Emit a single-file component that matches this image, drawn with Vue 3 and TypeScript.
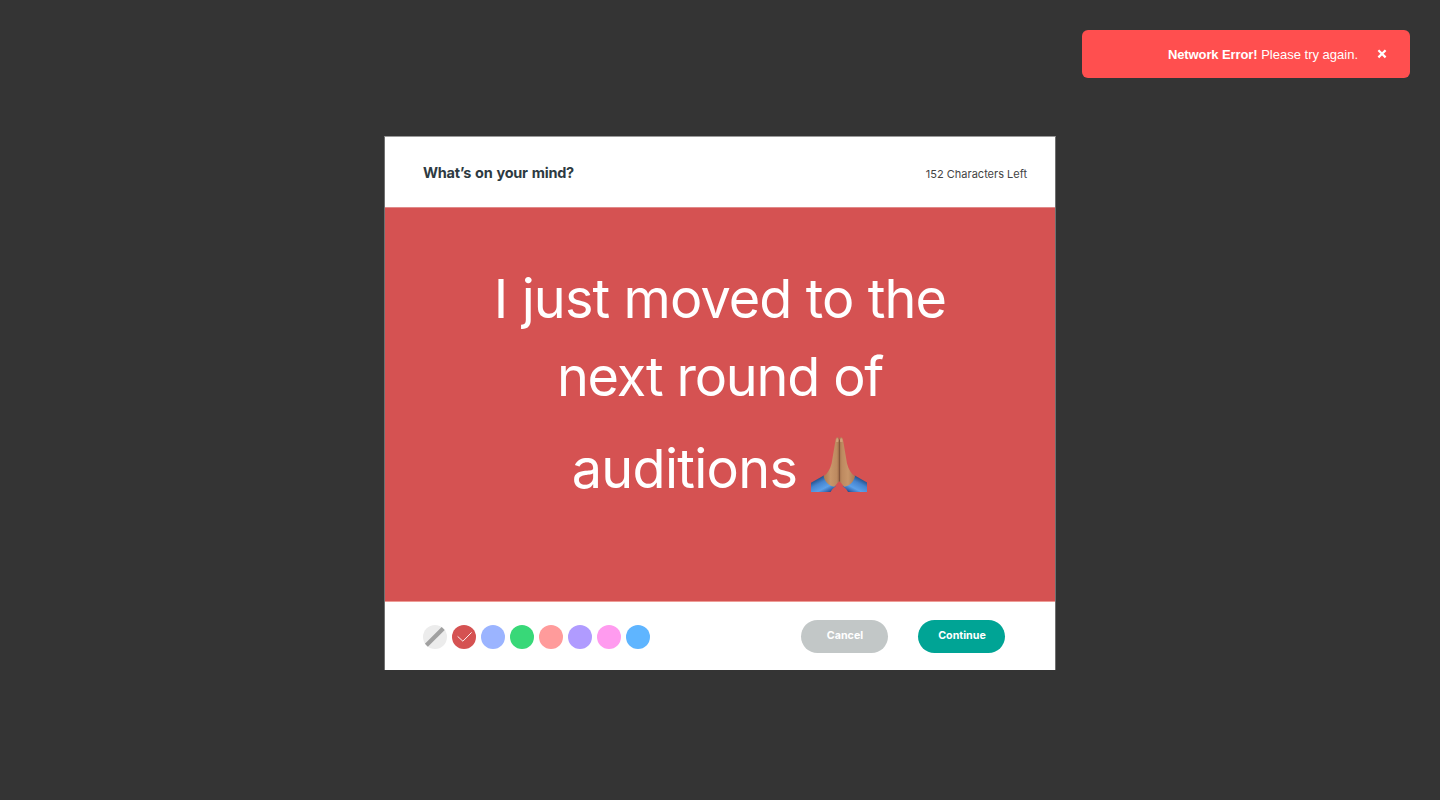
<script setup lang="ts">
import { computed, ref } from 'vue'

interface Swatch {
  name: string
  color: string
}

const swatches: Swatch[] = [
  { name: 'none', color: '#ececec' },
  { name: 'red', color: '#d55252' },
  { name: 'periwinkle', color: '#9bb4ff' },
  { name: 'green', color: '#38d878' },
  { name: 'salmon', color: '#ff9b9b' },
  { name: 'violet', color: '#b09bff' },
  { name: 'pink', color: '#ff9bef' },
  { name: 'blue', color: '#5fb5ff' },
]

const selected = ref('red')
const toastOpen = ref(true)
const charactersLeft = ref(152)
const background = computed(() => swatches.find((s) => s.name === selected.value)?.color ?? '#d55252')
</script>

<template>
  <div class="page">
    <div v-if="toastOpen" class="toast">
      <p class="toast-text"><strong>Network Error!</strong> <span>Please try again.</span></p>
      <button class="toast-close" @click="toastOpen = false">
        <svg width="10" height="10" viewBox="0 0 10 10">
          <path d="M1.4 1.2 8.6 8.4M8.6 1.2 1.4 8.4" stroke="#fff" stroke-width="2.2" fill="none" />
        </svg>
      </button>
    </div>

    <section class="dialog">
      <header class="head">
        <h1 class="title">What’s on your mind?</h1>
        <span class="count">{{ charactersLeft }} Characters Left</span>
      </header>

      <div class="canvas" :style="{ backgroundColor: background }">
        <div class="line first"><span>I just moved to the</span></div>
        <div class="line second"><span>next round of</span></div>
        <div class="line third">
          <span>auditions</span>
          <svg class="hands" width="56" height="56" viewBox="0 0 56 56">
            <defs>
              <linearGradient id="skin" x1="0" x2="1" y1="0" y2="0">
                <stop offset="0" stop-color="#a87850" />
                <stop offset="0.45" stop-color="#c8966a" />
                <stop offset="0.85" stop-color="#bd8a60" />
                <stop offset="1" stop-color="#a5734e" />
              </linearGradient>
              <linearGradient id="sleeve" gradientUnits="userSpaceOnUse" x1="5" y1="41" x2="15" y2="60">
                <stop offset="0" stop-color="#1d4378" />
                <stop offset="0.3" stop-color="#4584cf" />
                <stop offset="0.6" stop-color="#5ca0e9" />
                <stop offset="0.8" stop-color="#3567ae" />
                <stop offset="1" stop-color="#17264f" />
              </linearGradient>
              <g id="half">
                <path d="M0 45.8 12.8 38.5C15 43 18 47 25 49L21.5 52 19.5 55H0Z" fill="url(#sleeve)" />
                <path d="M12.6 39.3C16.2 37 19 32.5 20.6 26.5L24.4 4C24.7 1.2 25.6.2 26.8.2 27.9.4 28 1.5 28 3.5V44.5C27 45.5 25.5 47 23.2 49.8 17.8 49 13.8 44.5 12.6 39.3Z" fill="url(#skin)" />
                <path d="M25.1 3.5C25.3.9 27.2.5 27.6 3.2L27.4 5H25Z" fill="#d0a078" />
              </g>
            </defs>
            <use href="#half" />
            <use href="#half" transform="translate(56.6 0) scale(-1 1)" />
            <path d="M28.4 2.5V44.5" stroke="#80553a" stroke-width="1.1" />
          </svg>
        </div>
      </div>

      <footer class="foot">
        <div class="swatches">
          <button
            v-for="s in swatches"
            :key="s.name"
            class="swatch"
            :style="{ backgroundColor: s.color }"
            @click="selected = s.name"
          >
            <svg v-if="s.name === 'none'" width="24" height="24" viewBox="0 0 24 24">
              <path d="M3.4 20.2 20.2 3.4" stroke="#a0a0a0" stroke-width="4.2" />
            </svg>
            <svg v-else-if="s.name === selected" width="24" height="24" viewBox="0 0 24 24">
              <path d="M5.6 11.4 10.9 16.2 19.6 7.4" stroke="#fff" stroke-width="0.9" fill="none" />
            </svg>
          </button>
        </div>
        <div class="actions">
          <button class="action cancel"><span>Cancel</span></button>
          <button class="action continue"><span>Continue</span></button>
        </div>
      </footer>
    </section>
  </div>
</template>

<style>
body {
  background: #343434;
}
</style>

<style scoped>
.page {
  box-sizing: border-box;
  width: 1440px;
  height: 800px;
  padding: 30px 30px 0;
  background: #343434;
  font-family: "Inter", "Liberation Sans", Arial, sans-serif;
  display: flex;
  flex-direction: column;
  overflow: hidden;
}
button {
  border: 0;
  padding: 0;
  font-family: inherit;
  cursor: pointer;
}
button svg {
  display: block;
}
.toast {
  box-sizing: border-box;
  align-self: flex-end;
  display: flex;
  align-items: center;
  justify-content: flex-end;
  width: 328px;
  height: 48px;
  padding-right: 23px;
  border-radius: 6px;
  background: #ff4f4f;
  color: #fff;
}
.toast-text {
  margin: 0 19px 0 0;
  padding-top: 2px;
  font: 13px/18px "Liberation Sans", Arial, sans-serif;
  white-space: nowrap;
}
.toast-text strong {
  letter-spacing: -0.1px;
}
.toast-close {
  background: none;
}
.dialog {
  box-sizing: border-box;
  width: 672px;
  height: 534px;
  margin: 58px 0 0 354px;
  display: flex;
  flex-direction: column;
  background: #fff;
  border-top: 1px solid #9a9a9a;
  border-left: 1px solid #707070;
  border-right: 1px solid #707070;
}
.head {
  box-sizing: border-box;
  height: 71px;
  display: flex;
  align-items: center;
  justify-content: space-between;
  padding: 2px 28px 0 38px;
  border-bottom: 1px solid #e08a8a;
}
.title {
  margin: 0;
  color: #2d3a41;
  font-size: 14.5px;
  line-height: 20px;
  font-weight: 700;
  letter-spacing: -0.25px;
  word-spacing: 0.8px;
}
.count {
  padding-top: 2px;
  color: #444;
  font-size: 11px;
}
.canvas {
  height: 394px;
  box-sizing: border-box;
  padding-top: 51px;
  color: #fff;
  font-size: 54px;
  border-bottom: 1px solid #ee9c96;
}
.line {
  display: flex;
  justify-content: center;
  height: 78px;
  line-height: 79px;
  white-space: nowrap;
}
.first {
  letter-spacing: -0.9px;
}
.second {
  letter-spacing: -1.2px;
}
.third {
  padding: 14px 1px 0 0;
  gap: 14px;
  letter-spacing: -0.7px;
}
.hands {
  margin-top: 8px;
}
.foot {
  flex: 1;
  display: flex;
  justify-content: space-between;
  padding: 18px 50px 0 38px;
}
.swatches {
  display: flex;
  gap: 5px;
  padding-top: 5px;
}
.swatch {
  width: 24px;
  height: 24px;
  border-radius: 50%;
}
.actions {
  display: flex;
  gap: 30px;
}
.action {
  width: 87px;
  height: 33px;
  padding: 0 0 3px 1px;
  border-radius: 17px;
  color: #fff;
  font-size: 10.7px;
  font-weight: 700;
}
.cancel {
  background: #c2c7c7;
}
.continue {
  background: #00a495;
}
</style>
